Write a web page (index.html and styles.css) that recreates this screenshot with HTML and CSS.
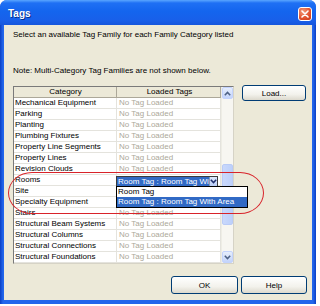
FILE: index.html
```html
<!DOCTYPE html>
<html lang="en">
<head>
    <meta charset="UTF-8">
    <meta name="viewport" content="width=device-width, initial-scale=1.0">
    <title>Tags</title>
    <link rel="stylesheet" href="styles.css">
</head>
<body>
    <div class="window">
      <div class="titlebar">
        <span class="title">Tags</span>
        <button class="close" aria-label="Close">
          <svg width="8" height="8" viewBox="0 0 8 8"><path d="M1 1L7 7M7 1L1 7" stroke="#fff" stroke-width="1.6" stroke-linecap="round"/></svg>
        </button>
      </div>
      <div class="client">
        <p class="intro">Select an available Tag Family for each Family Category listed</p>
        <p class="note">Note: Multi-Category Tag Families are not shown below.</p>
        <div class="main">
          <div class="listview">
            <div class="rows">
              <div class="row head">
                <div class="cell">Category</div>
                <div class="cell">Loaded Tags</div>
              </div>
              <div class="row"><div class="cell">Mechanical Equipment</div><div class="cell empty">No Tag Loaded</div></div>
              <div class="row"><div class="cell">Parking</div><div class="cell empty">No Tag Loaded</div></div>
              <div class="row"><div class="cell">Planting</div><div class="cell empty">No Tag Loaded</div></div>
              <div class="row"><div class="cell">Plumbing Fixtures</div><div class="cell empty">No Tag Loaded</div></div>
              <div class="row"><div class="cell">Property Line Segments</div><div class="cell empty">No Tag Loaded</div></div>
              <div class="row"><div class="cell">Property Lines</div><div class="cell empty">No Tag Loaded</div></div>
              <div class="row"><div class="cell">Revision Clouds</div><div class="cell empty">No Tag Loaded</div></div>
              <div class="row">
                <div class="cell">Rooms</div>
                <div class="cell combo-cell">
                  <div class="combo">
                    <span class="combo-value">Room Tag : Room Tag Wi</span>
                    <span class="combo-arrow">
                      <svg width="7" height="5" viewBox="0 0 7 5"><path d="M0.8 0.8L3.5 3.6L6.2 0.8" fill="none" stroke="#1d2f6e" stroke-width="1.5"/></svg>
                    </span>
                  </div>
                  <ul class="dropdown">
                    <li>Room Tag</li>
                    <li class="selected">Room Tag : Room Tag With Area</li>
                  </ul>
                </div>
              </div>
              <!-- loaded-tag cells here sit under the open dropdown -->
              <div class="row"><div class="cell">Site</div><div class="cell empty"></div></div>
              <div class="row"><div class="cell">Specialty Equipment</div><div class="cell empty"></div></div>
              <div class="row"><div class="cell">Stairs</div><div class="cell empty">No Tag Loaded</div></div>
              <div class="row"><div class="cell">Structural Beam Systems</div><div class="cell empty">No Tag Loaded</div></div>
              <div class="row"><div class="cell">Structural Columns</div><div class="cell empty">No Tag Loaded</div></div>
              <div class="row"><div class="cell">Structural Connections</div><div class="cell empty">No Tag Loaded</div></div>
              <div class="row"><div class="cell">Structural Foundations</div><div class="cell empty">No Tag Loaded</div></div>
            </div>
            <div class="scrollbar">
              <span class="sb-btn">
                <svg width="7" height="5" viewBox="0 0 7 5"><path d="M0.8 4.2L3.5 1.4L6.2 4.2" fill="none" stroke="#4d6185" stroke-width="1.5"/></svg>
              </span>
              <div class="track"><div class="thumb"></div></div>
              <span class="sb-btn">
                <svg width="7" height="5" viewBox="0 0 7 5"><path d="M0.8 0.8L3.5 3.6L6.2 0.8" fill="none" stroke="#4d6185" stroke-width="1.5"/></svg>
              </span>
            </div>
          </div>
          <button class="btn load">Load...</button>
        </div>
        <div class="footer">
          <button class="btn ok">OK</button>
          <button class="btn help">Help</button>
        </div>
        <div class="highlight"></div>
      </div>
    </div>
</body>
</html>
```

FILE: styles.css
```css
* {
    margin: 0;
    padding: 0;
    box-sizing: border-box;
}
body {
    width: 320px;
    height: 306px;
    background: #fff;
    font-family: 'Liberation Sans', Arial, sans-serif;
    font-size: 8px;
    color: #000;
    overflow: hidden;
}
.window {
    width: 316px;
    height: 304px;
    display: flex;
    flex-direction: column;
    border-radius: 7px 7px 0 0;
    background: #1a5ee8;
    background: linear-gradient(to right, #0a3fc4, #2266ec 3px, #2266ec calc(100% - 3px), #0a3fc4);
}
.titlebar {
    height: 25px;
    display: flex;
    align-items: center;
    justify-content: space-between;
    padding: 0 4px 0 8px;
    border-radius: 7px 7px 0 0;
    background: linear-gradient(#5aa6ff 0, #1f70f4 3px, #1465ee 45%, #1860ea 80%, #1556dc 100%);
}
.title {
    color: #fff;
    font-weight: bold;
    font-size: 10px;
    text-shadow: 1px 1px 0 #0a2f8a;
    margin-top: 2px;
}
.close {
    width: 14px;
    height: 14px;
    margin-top: 3px;
    display: flex;
    align-items: center;
    justify-content: center;
    border: 1px solid #fff;
    border-radius: 3px;
    background: radial-gradient(circle at 35% 30%, #f29a7a, #e0502c 60%, #c8381a);
}
.client {
    position: relative;
    flex: 1;
    margin: 0 4px 4px;
    padding: 0 5px 0 9px;
    display: flex;
    flex-direction: column;
    background: #ece9d8;
}
.intro {
    margin-top: 5px;
    line-height: 10px;
}
.note {
    margin-top: 26px;
    line-height: 10px;
}
.main {
    margin-top: 10px;
    display: flex;
    align-items: flex-start;
    gap: 8px;
}
.listview {
    width: 221px;
    height: 178px;
    display: flex;
    border: 1px solid #7a7a7a;
    border-right-color: #d6d3c6;
    border-bottom-color: #d6d3c6;
    background: #fff;
}
.rows {
    width: 207px;
}
.row {
    display: flex;
    height: 11px;
}
.cell {
    height: 11px;
    line-height: 10px;
    padding-left: 1px;
    white-space: nowrap;
    overflow: hidden;
    border-right: 1px solid #e4e3dd;
    border-bottom: 1px solid #e4e3dd;
}
.cell:first-child {
    width: 103px;
}
.cell:last-child {
    width: 104px;
    padding-left: 2px;
}
.row.head .cell {
    text-align: center;
    background: #ece9d8;
    border-right: 1px solid #aca899;
    border-bottom: 1px solid #aca899;
}
.cell.empty {
    color: #aca899;
}
.cell.combo-cell {
    position: relative;
    overflow: visible;
    padding: 0;
}
.combo {
    display: flex;
    height: 11px;
    width: 102px;
    margin-left: -1px;
    margin-top: 1px;
    border: 1px solid #3b3b3b;
    background: #fff;
}
.combo-value {
    flex: 1;
    white-space: nowrap;
    line-height: 9px;
    padding-left: 1px;
    color: #fff;
    background: #316ac5;
}
.combo-arrow {
    width: 11px;
    display: flex;
    align-items: center;
    justify-content: center;
    background: linear-gradient(#dfe8fc, #b9cdf7);
    border-left: 1px solid #7f9db9;
}
.dropdown {
    position: absolute;
    left: -1px;
    top: 11px;
    width: 132px;
    list-style: none;
    border: 1px solid #000;
    background: #fff;
    z-index: 2;
}
.dropdown li {
    height: 10px;
    line-height: 10px;
    padding-left: 1px;
    white-space: nowrap;
}
.dropdown li.selected {
    color: #fff;
    background: #316ac5;
}
.scrollbar {
    width: 12px;
    display: flex;
    flex-direction: column;
    background: #f7f6f1;
    border-left: 1px solid #eeede5;
}
.sb-btn {
    height: 12px;
    display: flex;
    align-items: center;
    justify-content: center;
    border: 1px solid #c3d3fd;
    border-radius: 2px;
    background: linear-gradient(#e6eefc, #c3d4fb);
}
.track {
    flex: 1;
    padding-top: 65px;
}
.thumb {
    height: 61px;
    border-radius: 2px;
    border: 1px solid #b9cbf7;
    background: linear-gradient(to right, #c9d8fc, #bdd0fa);
}
.btn {
    font-family: inherit;
    font-size: 8px;
    color: #000;
    border: 1px solid #003c74;
    border-radius: 3px;
    background: linear-gradient(#ffffff, #f3f2ec 60%, #dcd9cd);
}
.load {
    width: 64px;
    height: 16px;
    margin-top: -1px;
}
.footer {
    margin-top: 12px;
    display: flex;
    justify-content: flex-end;
    gap: 3px;
}
.ok {
    width: 67px;
    height: 18px;
}
.help {
    width: 66px;
    height: 18px;
}
.highlight {
    position: absolute;
    left: 4px;
    top: 147px;
    width: 256px;
    height: 42px;
    border: 1.5px solid #d8232a;
    border-radius: 24px / 21px;
    pointer-events: none;
    z-index: 3;
}
```
